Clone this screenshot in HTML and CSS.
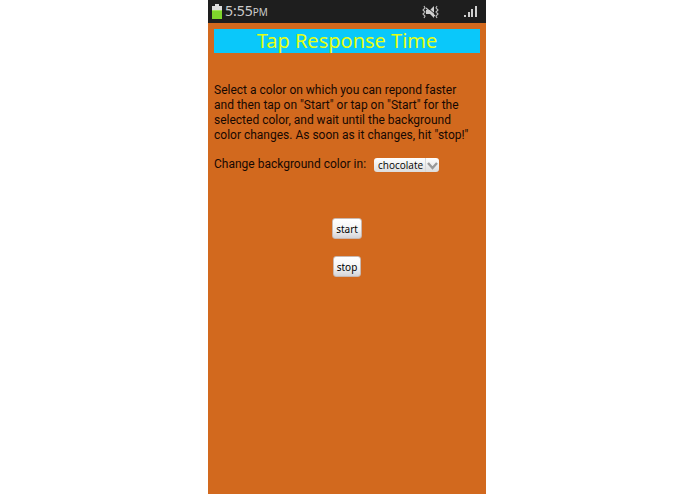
FILE: index.html
```html
<!DOCTYPE html>
<html lang="en">
<head>
<meta charset="utf-8">
<meta name="viewport" content="width=device-width, initial-scale=1">
<title>Tap Response Time</title>
<link rel="stylesheet" href="styles.css">
</head>
<body>
<div class="phone">
  <header class="status">
    <svg class="battery" viewBox="0 0 10 15" aria-hidden="true">
      <path fill="#ddd" d="M3 0h4v2h3v5H0V2h3z"/>
      <path fill="#80d52c" d="M0 6h10v9H0z"/>
      <path fill="#a4e55c" d="M0 6h10v1H0z"/>
    </svg>
    <time class="clock">5:55<span class="meridiem">PM</span></time>
    <svg class="mute" viewBox="0 0 17 14" aria-hidden="true">
      <path fill="#d0d0d0" d="M4 5h4l4-4v12L8 9H4z"/>
      <path fill="none" stroke="#1e1e1e" stroke-width="1" d="M5 2l9 8"/>
      <path fill="none" stroke="#d0d0d0" stroke-width="1.2" d="M4 3l9 8"/>
      <path fill="none" stroke="#bdbdbd" stroke-width="1.1" d="M2 1l1 2-2 2 2 2-2 2 2 2-1 2M15 1l-1 2 2 2-2 2 2 2-2 2 1 2"/>
    </svg>
    <svg class="signal" viewBox="0 0 13 11" aria-hidden="true">
      <path fill="#d0d0d0" d="M0 9h2v2H0zM4 6h2v5H4zM7 3h2v8H7zM11 0h2v11h-2z"/>
    </svg>
  </header>
  <main class="content">
    <h1 class="title">Tap Response Time</h1>
    <p class="intro">Select a color on which you can repond faster and then tap on "Start" or tap on "Start" for the selected color, and wait until the background color changes. As soon as it changes, hit "stop!"</p>
    <div class="picker">
      <label for="color">Change background color in:</label>
      <span class="select-box">
        <select id="color" class="select">
          <option>chocolate</option>
        </select>
        <svg class="chevron" viewBox="0 0 11 8" aria-hidden="true">
          <path fill="none" stroke="#999" stroke-width="2.4" d="M1 1l4.500 5L10 1"/>
        </svg>
      </span>
    </div>
    <div class="actions">
      <button type="button" class="button">start</button>
      <button type="button" class="button">stop</button>
    </div>
  </main>
</div>
</body>
</html>
```
FILE: styles.css
```css
* {
  box-sizing: border-box;
}

body {
  margin: 0;
  padding-right: 1px;
  background: #fff;
  color: #160802;
  font: 12px/15px Roboto, sans-serif;
}

.phone {
  display: flex;
  flex-direction: column;
  width: 40%;
  min-width: 278px;
  min-height: 100vh;
  margin: 0 auto;
  background: #d2691e;
}

.status {
  display: flex;
  align-items: center;
  height: 23px;
  padding: 0 9px 0 4px;
  background: #1e1e1e;
  color: #ccc;
}

.battery {
  width: 10px;
  height: 15px;
}

.clock {
  margin: 0 auto 0 3px;
  font-family: "Noto Sans", sans-serif;
  font-size: 14px;
}

.meridiem {
  font-size: 10px;
}

.mute {
  width: 17px;
  height: 14px;
  margin-right: 25px;
}

.signal {
  width: 13px;
  height: 11px;
}

.content {
  padding: 6px;
}

.title {
  margin: 0 0 30px;
  background: #0ac8fa;
  color: #e4ff14;
  font-family: "Noto Sans", sans-serif;
  font-size: 20px;
  font-weight: 400;
  line-height: 24px;
  text-align: center;
}

.intro {
  margin: 0 0 14px;
  padding-right: 6px;
}

.picker {
  display: flex;
  align-items: center;
  gap: 8px;
}

.select-box {
  position: relative;
  display: flex;
}

.select {
  appearance: none;
  width: 65px;
  height: 14px;
  padding: 0 13px 0 4px;
  border: 0;
  border-radius: 3px;
  background: linear-gradient(90deg, transparent 51px, #d8d8d8 51px, #d8d8d8 52px, transparent 52px), linear-gradient(#fff, #ddd);
  color: #000;
  font: 10px/14px "Open Sans", "Noto Sans", sans-serif;
}

.chevron {
  position: absolute;
  top: 4px;
  right: 1px;
  width: 11px;
  height: 8px;
  pointer-events: none;
}

.actions {
  display: flex;
  flex-direction: column;
  align-items: center;
  gap: 17px;
  margin-top: 46px;
}

.button {
  height: 21px;
  padding: 0 3px;
  border: 1px solid #c9b8b0;
  border-radius: 3px;
  background: linear-gradient(#fff, #f4f4f4 55%, #d4d4d8);
  color: #000;
  font: 10px/18px "Noto Sans", sans-serif;
}
```
